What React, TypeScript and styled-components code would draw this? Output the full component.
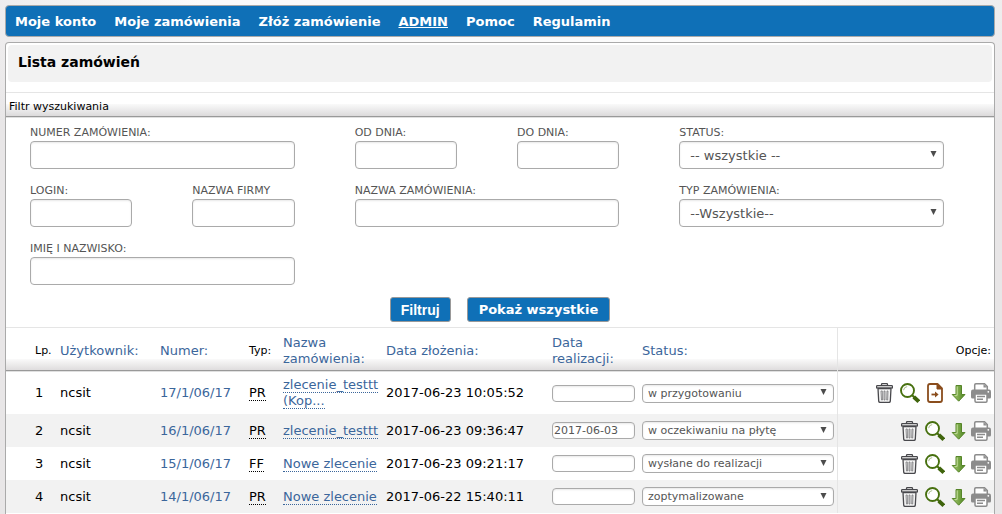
import React from 'react';
import styled, { createGlobalStyle } from 'styled-components';

const GlobalStyle = createGlobalStyle`
  *, *::before, *::after { box-sizing: border-box; }
  body {
    margin: 0;
    min-height: 100vh;
    overflow-x: hidden;
    background: #e8e6e7 radial-gradient(ellipse 60% 220px at 50% 0, #fbfbfb 50%, #e8e6e7 100%) no-repeat;
    font-family: Verdana, 'DejaVu Sans', sans-serif;
    font-size: 13px;
    line-height: 16px;
    color: #000;
  }
  a { color: #3b669b; text-decoration: none; }
`;

const Page = styled.div`
  padding: 5px 7px 0 5px;
`;

const Nav = styled.nav`
  display: flex;
  align-items: center;
  gap: 18px;
  height: 32px;
  padding: 1px 9px 0;
  border: 1px solid #aaa;
  border-radius: 4px;
  background: #0f70b7;
`;

const NavLink = styled.a<{ $current?: boolean }>`
  && {
    color: #fff;
    font-weight: bold;
    text-decoration: ${p => (p.$current ? 'underline' : 'none')};
  }
`;

const Panel = styled.main`
  margin-top: 5px;
  padding-bottom: 1px;
  border: 1px solid #aaa;
  border-bottom: 0;
  border-radius: 4px 4px 0 0;
  background: #fff;
`;

const Title = styled.h1`
  margin: 2px 2px 10px;
  padding: 8px 10px 11px;
  border-radius: 4px;
  background: #f2f2f2;
  font-size: 14px;
  line-height: 18px;
`;

const shade = 'linear-gradient(#fafafa, #dcdadb) bottom / 100% 12px no-repeat';

const FilterHeading = styled.h2`
  margin: 0;
  padding: 6px 3px 1px;
  border-top: 1px solid #e5e5e5;
  border-bottom: 1px solid #999;
  box-shadow: 0 1px #e0e0e0;
  background: ${shade};
  font-size: 11px;
  font-weight: normal;
`;

const Form = styled.form`
  padding: 6px 50px 5px 24px;
`;

const Fields = styled.div`
  display: grid;
  grid-template-columns: repeat(6, 1fr);
  gap: 12px 60px;
`;

const Field = styled.label<{ $span?: number }>`
  grid-column: span ${p => p.$span ?? 1};
  padding-top: 2px;
  font-size: 11px;
  line-height: 16px;
  color: #555;
  white-space: nowrap;
`;

const TextBox = styled.input<{ $small?: boolean }>`
  display: block;
  width: 100%;
  height: ${p => (p.$small ? 17 : 28)}px;
  padding: 0 ${p => (p.$small ? 1 : 8)}px;
  border: 1px solid #aaa;
  border-radius: 4px;
  background: #fff;
  box-shadow: inset 0 1px 2px #e8e8e8;
  color: #555;
  font-family: inherit;
  font-size: ${p => (p.$small ? 11 : 13)}px;
`;

const SelectBox = styled.span`
  display: block;
  position: relative;
`;

const Select = styled.select<{ $small?: boolean }>`
  display: block;
  appearance: none;
  width: 100%;
  height: ${p => (p.$small ? 19 : 28)}px;
  padding: 0 20px 0 ${p => (p.$small ? 5 : 10)}px;
  border: 1px solid #aaa;
  border-radius: 4px;
  background: #fff;
  box-shadow: inset 0 1px 2px #e8e8e8;
  color: #555;
  font-family: inherit;
  font-size: ${p => (p.$small ? 11 : 13)}px;
`;

const Caret = styled.svg`
  position: absolute;
  right: 7px;
  top: 50%;
  margin-top: -4px;
  pointer-events: none;
`;

const Actions = styled.div`
  display: flex;
  justify-content: center;
  gap: 16px;
  margin: 12px -26px 0 0;
`;

const Button = styled.button<{ $plain?: boolean }>`
  height: 25px;
  padding: 0 ${p => (p.$plain ? 10 : 11)}px;
  border: 1px solid #999;
  border-radius: 3px;
  background: #0f70b7;
  color: #fff;
  font-family: ${p => (p.$plain ? "'Liberation Sans', Arial, sans-serif" : 'inherit')};
  font-size: ${p => (p.$plain ? 14 : 13)}px;
  font-weight: bold;
`;

const Orders = styled.table`
  width: 100%;
  table-layout: fixed;
  border-collapse: separate;
  border-spacing: 0;
`;

const Head = styled.th<{ $small?: boolean; $options?: boolean; $first?: boolean }>`
  height: 45px;
  padding: 3px 3px 0 ${p => (p.$first ? 29 : 4)}px;
  border-top: 1px solid #e5e5e5;
  border-bottom: 1px solid #e0e0e0;
  border-left: ${p => (p.$options ? '1px solid #e5e5e5' : 0)};
  box-shadow: inset 0 -1px #999;
  background: ${shade};
  font-size: ${p => (p.$small ? 11 : 13)}px;
  font-weight: normal;
  text-align: ${p => (p.$options ? 'right' : 'left')};
`;

const Row = styled.tr`
  &:nth-child(even) { background: #f2f2f2; }
`;

const Cell = styled.td<{ $options?: boolean; $first?: boolean; $tight?: boolean }>`
  height: 33px;
  padding: ${p => (p.$tight ? 0 : 5)}px 3px;
  padding-left: ${p => (p.$first ? 29 : 4)}px;
  border-left: ${p => (p.$options ? '1px solid #e5e5e5' : 0)};
  white-space: nowrap;
`;

const Abbr = styled.abbr`
  border-bottom: 1px dotted;
  text-decoration: none;
`;

const OrderName = styled.a`
  border-bottom: 1px dotted #3b669b;
  white-space: pre-line;
`;

const Options = styled.div`
  display: flex;
  justify-content: flex-end;
  gap: 5px;
`;

const IconButton = styled.button`
  display: flex;
  padding: 0;
  border: 0;
  background: none;
  cursor: pointer;
`;

const TrashIcon = () => (
  <svg width="20" height="20" viewBox="0 0 20 20" fill="none" stroke="#48484c">
    <path d="M6.500 2.500V1.500q0-.9.9-.9h4.200q.9 0 .9.9v1" strokeWidth="1.300" />
    <path d="M1.600 5V3.300q0-.8.8-.8h14.200q.8 0 .8.8V5z" fill="#ccc" strokeWidth="1.200" />
    <path d="M3 5.500l.7 12.600q.1 1.300 1.400 1.300h8.800q1.300 0 1.400-1.300L16 5.500z" fill="#f4f4f4" strokeWidth="1.300" />
    <path d="M6 8l.5 9h1L7.300 8zM9 8v9h1V8zM12 8l-.3 9h1L13 8z" stroke="#77777a" strokeWidth=".8" />
  </svg>
);

const SearchIcon = () => (
  <svg width="20" height="20" viewBox="0 0 20 20" fill="none" stroke="#47700f">
    <circle cx="7.500" cy="7.500" r="6.500" fill="#fff" strokeWidth="1.900" />
    <path d="M3.600 7.200q.3-3.200 3.600-3.600" stroke="#a9bd8c" strokeWidth="1" />
    <path d="M12 12l2.500 2.500" strokeWidth="2.200" />
    <path d="M13.800 14l5 4.600" stroke="#3f640c" strokeWidth="3.800" />
  </svg>
);

const ExportIcon = () => (
  <svg width="20" height="20" viewBox="0 0 20 20" fill="none" stroke="#8a4d1d" strokeWidth="1.800">
    <path d="M3 3q0-2 2-2h7.500L17 5.500V17q0 2-2 2H5q-2 0-2-2z" fill="#fff" strokeLinejoin="round" />
    <path d="M12 1v5h5z" fill="#8a4d1d" strokeWidth="1" />
    <path d="M6.500 11.500H11" />
    <path d="M10 8.500l3.600 3-3.600 3z" fill="#8a4d1d" stroke="none" />
  </svg>
);

const DownloadIcon = () => (
  <svg width="16" height="20" viewBox="0 0 16 20">
    <defs>
      <linearGradient id="leaf" x1="0" x2="1">
        <stop offset="0" stopColor="#a6cb70" />
        <stop offset="1" stopColor="#4d8420" />
      </linearGradient>
    </defs>
    <path d="M6 2.500h5.500v9H15L8.700 18.200 2.200 11.500H6z" fill="url(#leaf)" stroke="#568529" strokeLinejoin="round" />
    <path d="M7.200 3.500v8.900H4.700" fill="none" stroke="#c2dc9c" />
  </svg>
);

const PrinterIcon = () => (
  <svg width="20" height="20" viewBox="0 0 20 20" fill="none" stroke="#8c8c8c">
    <path d="M3.700 8V2q0-1.200 1.200-1.200h8.600l2.800 2.800V8" fill="#fff" strokeWidth="1.500" />
    <path d="M12.500 1v3.500H16z" fill="#8c8c8c" stroke="none" />
    <path d="M2 6.500h16q2 0 2 2V14q0 1.500-1.500 1.500h-17Q0 15.500 0 14V8.500q0-2 2-2z" fill="#8c8c8c" stroke="none" />
    <path d="M4 11h12v7q0 1.200-1.200 1.200H5.200Q4 19.200 4 18z" fill="#fff" strokeWidth="1.500" />
    <path d="M6 13.500h8M6 16.300h6" strokeWidth="1.400" />
    <circle cx="17.300" cy="8.800" r=".9" fill="#fff" stroke="none" />
  </svg>
);

const DropDown = ({ value, small, label }: { value: string; small?: boolean; label?: string }) => (
  <SelectBox>
    <Select $small={small} aria-label={label} defaultValue={value}>
      <option>{value}</option>
    </Select>
    <Caret width="7" height="6" viewBox="0 0 7 6" fill="#4c4c4c">
      <path d="M.5 0h6L3.500 6z" />
    </Caret>
  </SelectBox>
);

const menu = ['Moje konto', 'Moje zamówienia', 'Złóż zamówienie', 'ADMIN', 'Pomoc', 'Regulamin'];

const columns = [50, 100, 89, 34, 103, 166, 90, 199];

const orders = [
  { id: '17/1/06/17', type: 'PR', name: 'zlecenie_testtt\n(Kop...', placed: '2017-06-23 10:05:52', due: '', status: 'w przygotowaniu', exportable: true },
  { id: '16/1/06/17', type: 'PR', name: 'zlecenie_testtt', placed: '2017-06-23 09:36:47', due: '2017-06-03', status: 'w oczekiwaniu na płytę' },
  { id: '15/1/06/17', type: 'FF', name: 'Nowe zlecenie', placed: '2017-06-23 09:21:17', due: '', status: 'wysłane do realizacji' },
  { id: '14/1/06/17', type: 'PR', name: 'Nowe zlecenie', placed: '2017-06-22 15:40:11', due: '', status: 'zoptymalizowane' },
];

export default function App() {
  return (
    <>
      <GlobalStyle />
      <Page>
        <Nav>
          {menu.map(item => (
            <NavLink key={item} href="#" $current={item === 'ADMIN'}>{item}</NavLink>
          ))}
        </Nav>
        <Panel>
          <Title>Lista zamówień</Title>
          <FilterHeading>Filtr wyszukiwania</FilterHeading>
          <Form onSubmit={e => e.preventDefault()}>
            <Fields>
              <Field $span={2}>NUMER ZAMÓWIENIA:<TextBox /></Field>
              <Field>OD DNIA:<TextBox /></Field>
              <Field>DO DNIA:<TextBox /></Field>
              <Field $span={2}>STATUS:<DropDown value="-- wszystkie --" /></Field>
              <Field>LOGIN:<TextBox /></Field>
              <Field>NAZWA FIRMY<TextBox /></Field>
              <Field $span={2}>NAZWA ZAMÓWIENIA:<TextBox /></Field>
              <Field $span={2}>TYP ZAMÓWIENIA:<DropDown value="--Wszystkie--" /></Field>
              <Field $span={2}>IMIĘ I NAZWISKO:<TextBox /></Field>
            </Fields>
            <Actions>
              <Button type="submit" $plain>Filtruj</Button>
              <Button type="button">Pokaż wszystkie</Button>
            </Actions>
          </Form>
          <Orders>
            <colgroup>
              {columns.map((width, i) => <col key={i} width={width} />)}
              <col />
            </colgroup>
            <thead>
              <tr>
                <Head $small $first>Lp.</Head>
                <Head><a href="#">Użytkownik:</a></Head>
                <Head><a href="#">Numer:</a></Head>
                <Head $small>Typ:</Head>
                <Head><a href="#">Nazwa zamówienia:</a></Head>
                <Head><a href="#">Data złożenia:</a></Head>
                <Head><a href="#">Data realizacji:</a></Head>
                <Head><a href="#">Status:</a></Head>
                <Head $small $options>Opcje:</Head>
              </tr>
            </thead>
            <tbody>
              {orders.map((o, i) => (
                <Row key={o.id}>
                  <Cell $first>{i + 1}</Cell>
                  <Cell>ncsit</Cell>
                  <Cell><a href="#">{o.id}</a></Cell>
                  <Cell><Abbr>{o.type}</Abbr></Cell>
                  <Cell><OrderName href="#">{o.name}</OrderName></Cell>
                  <Cell>{o.placed}</Cell>
                  <Cell $tight><TextBox $small aria-label="Data realizacji" defaultValue={o.due} /></Cell>
                  <Cell $tight><DropDown small label="Status" value={o.status} /></Cell>
                  <Cell $options>
                    <Options>
                      <IconButton aria-label="Usuń"><TrashIcon /></IconButton>
                      <IconButton aria-label="Podgląd"><SearchIcon /></IconButton>
                      {o.exportable && <IconButton aria-label="Przekaż"><ExportIcon /></IconButton>}
                      <IconButton aria-label="Pobierz"><DownloadIcon /></IconButton>
                      <IconButton aria-label="Drukuj"><PrinterIcon /></IconButton>
                    </Options>
                  </Cell>
                </Row>
              ))}
            </tbody>
          </Orders>
        </Panel>
      </Page>
    </>
  );
}
